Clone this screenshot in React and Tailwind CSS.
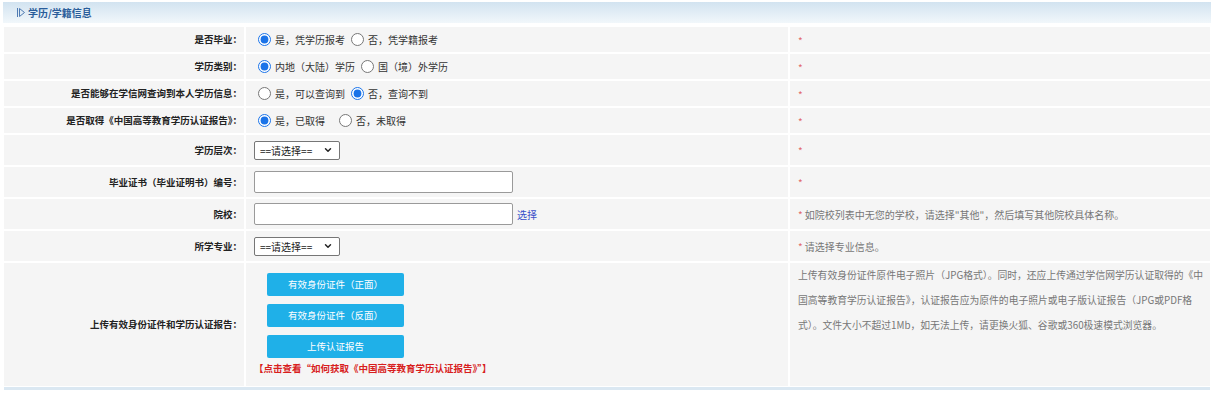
import { ChevronDown } from 'lucide-react';

const Row = ({ label, h, children, remark, remarkClass = '' }) => (
    <div className={`grid grid-cols-[240px_542px_420px] gap-x-[2px] ${h}`}>
        <div className="bg-[#f5f5f5] flex items-center justify-end pr-[2px] text-[9.5px] font-bold text-[#222]">
            {label}
        </div>
        <div className="bg-[#f5f5f5] flex items-center pl-[8px]">{children}</div>
        <div className={`bg-[#f5f5f5] pl-[8px] text-[10px] text-[#777] ${remarkClass}`}>
            {remark}
        </div>
    </div>
);

const Star = () => <span className="text-[#e26a6a] mr-[2px]">*</span>;

const Radio = ({ name, checked, text, first }) => (
    <label className={`flex items-center ${first ? 'ml-[4px]' : 'ml-[6px]'}`}>
        <input
            type="radio"
            name={name}
            defaultChecked={checked}
            className="w-[13px] h-[13px] m-0 accent-[#1a73e8]"
        />
        <span className="ml-[4px] text-[10px] text-[#333]">{text}</span>
    </label>
);

const Select = () => (
    <div className="w-[86px] h-[19px] border border-[#767676] rounded-[2px] bg-white flex items-center justify-between pl-[5px] pr-[6px] text-[10px] text-[#222]">
        <span>==请选择==</span>
        <ChevronDown size={10} strokeWidth={3.5} className="text-[#222]" />
    </div>
);

const TextBox = () => (
    <input
        type="text"
        className="w-[259px] h-[22px] border border-[#9a9a9a] rounded-[2px] bg-white"
    />
);

const UploadBtn = ({ text }) => (
    <div className="w-[137px] h-[23px] bg-[#1fb0e8] rounded-[2px] text-white text-[9.5px] flex items-center justify-center">
        {text}
    </div>
);

const App = () => {
    return (
        <div className="w-[1214px] h-[393px] bg-white font-['Noto_Sans_CJK_SC','Liberation_Sans',sans-serif] overflow-hidden">
            {/* section header */}
            <div className="pt-[2px] px-[3px]">
                <div className="h-[21px] pr-[1px] bg-linear-to-b from-[#d2e3f0] to-[#f1f7fb] flex items-center pl-[13px] text-[10px] font-bold text-[#2a5d9a]">
                    <svg width="10" height="11" viewBox="0 0 10 11" className="mr-[2px]">
                        <path d="M1.5 1v9" stroke="#4f7bb3" strokeWidth="1" fill="none" />
                        <path d="M3.5 1.5l5 4-5 4z" stroke="#4f7bb3" strokeWidth="1" fill="none" strokeLinejoin="round" />
                    </svg>
                    学历/学籍信息
                </div>
            </div>

            <div className="mt-[4px] px-[4px] flex flex-col gap-y-[2px]">
                <Row label="是否毕业：" h="h-[25px]" remark={<Star />} remarkClass="pt-[6px]">
                    <Radio first name="grad" checked text="是，凭学历报考" />
                    <Radio name="grad" text="否，凭学籍报考" />
                </Row>
                <Row label="学历类别：" h="h-[25px]" remark={<Star />} remarkClass="pt-[6px]">
                    <Radio first name="kind" checked text="内地（大陆）学历" />
                    <Radio name="kind" text="国（境）外学历" />
                </Row>
                <Row label="是否能够在学信网查询到本人学历信息：" h="h-[25px]" remark={<Star />} remarkClass="pt-[6px]">
                    <Radio first name="chsi" text="是，可以查询到" />
                    <Radio name="chsi" checked text="否，查询不到" />
                </Row>
                <Row label="是否取得《中国高等教育学历认证报告》：" h="h-[25px]" remark={<Star />} remarkClass="pt-[6px]">
                    <Radio first name="report" checked text="是，已取得" />
                    <span className="w-[8px]" />
                    <Radio name="report" text="否，未取得" />
                </Row>
                <Row label="学历层次：" h="h-[30px]" remark={<Star />} remarkClass="pt-[8px]">
                    <Select />
                </Row>
                <Row label="毕业证书（毕业证明书）编号：" h="h-[30px]" remark={<Star />} remarkClass="pt-[8px]">
                    <TextBox />
                </Row>
                <Row
                    label="院校："
                    h="h-[30px]"
                    remark={<><Star />如院校列表中无您的学校，请选择"其他"，然后填写其他院校具体名称。</>}
                    remarkClass="flex items-center"
                >
                    <TextBox />
                    <span className="ml-[4px] text-[10px] text-[#3a4fc8]">选择</span>
                </Row>
                <Row
                    label="所学专业："
                    h="h-[30px]"
                    remark={<><Star />请选择专业信息。</>}
                    remarkClass="flex items-center"
                >
                    <Select />
                </Row>
                <Row
                    label="上传有效身份证件和学历认证报告："
                    h="h-[123px]"
                    remark={
                        <p className="leading-[25px] text-[9.8px] pt-[0px]">
                            上传有效身份证件原件电子照片（JPG格式）。同时，还应上传通过学信网学历认证取得的《中国高等教育学历认证报告》，认证报告应为原件的电子照片或电子版认证报告（JPG或PDF格式）。文件大小不超过1Mb，如无法上传，请更换火狐、谷歌或360极速模式浏览器。
                        </p>
                    }
                >
                    <div className="flex flex-col self-start pt-[10px]">
                        <div className="ml-[13px] flex flex-col gap-y-[8px]">
                            <UploadBtn text="有效身份证件（正面）" />
                            <UploadBtn text="有效身份证件（反面）" />
                            <UploadBtn text="上传认证报告" />
                        </div>
                        <span className="mt-[3px] text-[9.5px] font-bold text-[#d81e1e]">
                            【点击查看“如何获取《中国高等教育学历认证报告》”】
                        </span>
                    </div>
                </Row>
            </div>
            <div className="mx-[4px] mt-[1px] h-[3px] bg-[#dbe8f2]" />
        </div>
    );
};

export default App;
